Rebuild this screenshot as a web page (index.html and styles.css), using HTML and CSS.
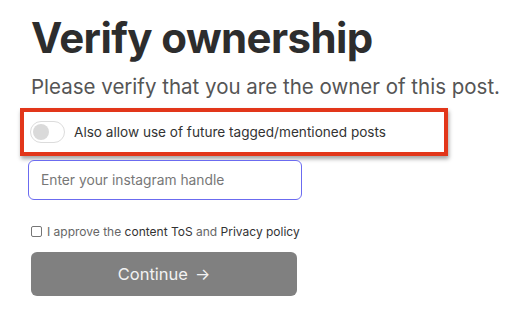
FILE: index.html
```html
<!DOCTYPE html>
<html>
<head>
<meta charset="utf-8">
<link rel="stylesheet" href="styles.css">
</head>
<body>
<main class="page">
  <h1 class="title">Verify ownership</h1>
  <p class="subtitle">Please verify that you are the owner of this post.</p>
  <div class="highlight">
    <label class="toggle-row">
      <span class="toggle"><span class="knob"></span></span>
      <span class="toggle-label">Also allow use of future tagged/mentioned posts</span>
    </label>
  </div>
  <input class="handle" type="text" placeholder="Enter your instagram handle">
  <label class="approve">
    <span class="box"></span>
    <span class="approve-text">I approve the <span class="link">content ToS</span> and <span class="link">Privacy policy</span></span>
  </label>
  <button class="continue">Continue <span class="arrow">→</span></button>
</main>
</body>
</html>
```
FILE: styles.css
```css
html, body {
  margin: 0;
  padding: 0;
  background: #ffffff;
}
body {
  font-family: Inter, "Noto Sans", sans-serif;
  color: #2d2d2d;
}
.page {
  display: flex;
  flex-direction: column;
  align-items: flex-start;
  padding: 14px 0 0 20px;
}
.title {
  margin: 0 0 0 11px;
  font-size: 42px;
  line-height: 48px;
  font-weight: 700;
  letter-spacing: -0.6px;
  color: #2d2d2d;
}
.subtitle {
  margin: 11px 0 0 11px;
  font-size: 20.5px;
  line-height: 28px;
  color: #555555;
}
.highlight {
  margin-top: 7px;
  width: 414px;
  height: 40px;
  border: 4px solid #e2361a;
  box-shadow: 1px 3px 4px rgba(0, 0, 0, 0.35);
  display: flex;
  align-items: center;
  padding-left: 6px;
}
.toggle-row {
  display: flex;
  align-items: center;
  gap: 9px;
}
.toggle {
  width: 31px;
  height: 20px;
  border: 1px solid #dcdcdc;
  border-radius: 12px;
  background: #fff;
  display: flex;
  align-items: center;
  padding-left: 2px;
  box-sizing: content-box;
}
.knob {
  width: 16px;
  height: 16px;
  border-radius: 50%;
  background: #dadada;
}
.toggle-label {
  font-size: 13.6px;
  color: #333333;
}
.handle {
  margin: 4px 0 0 8px;
  width: 274px;
  height: 40px;
  box-sizing: border-box;
  border: 1px solid #6b6bf0;
  border-radius: 6px;
  padding: 0 12px;
  font-family: inherit;
  font-size: 13.8px;
  color: #333;
  outline: none;
}
.handle::placeholder {
  color: #777777;
}
.approve {
  margin: 24px 0 0 11px;
  display: flex;
  align-items: center;
  gap: 5px;
}
.box {
  width: 9px;
  height: 9px;
  border: 1px solid #767676;
  border-radius: 2px;
  background: #fff;
}
.approve-text {
  font-size: 12px;
  color: #666666;
}
.link {
  color: #333333;
}
.continue {
  margin: 13px 0 0 11px;
  width: 266px;
  height: 44px;
  border: none;
  border-radius: 6px;
  background: #808080;
  color: #f2f2f2;
  font-family: inherit;
  font-size: 16.5px;
  display: flex;
  align-items: center;
  justify-content: center;
  gap: 7px;
}
.arrow {
  font-size: 16px;
}
```
